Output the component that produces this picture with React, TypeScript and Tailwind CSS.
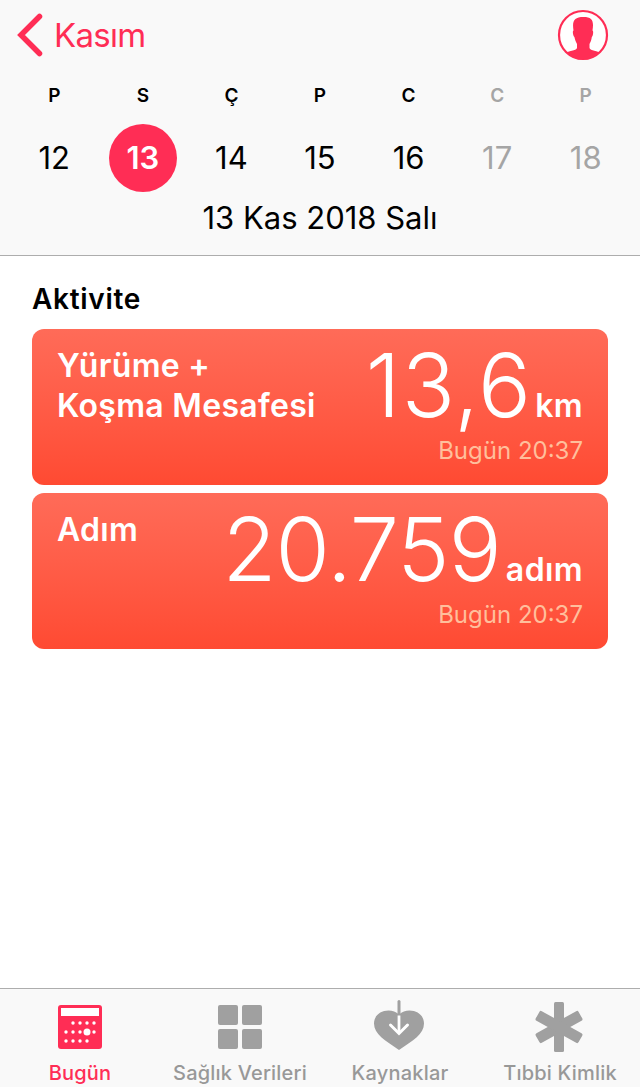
import type { ReactNode } from "react";
import clsx from "clsx";

const DAYS = [
  { letter: "P", date: 12 },
  { letter: "S", date: 13, selected: true },
  { letter: "Ç", date: 14 },
  { letter: "P", date: 15 },
  { letter: "C", date: 16 },
  { letter: "C", date: 17, future: true },
  { letter: "P", date: 18, future: true },
];

function ProfileIcon() {
  return (
    <svg width="52" height="52" viewBox="0 0 52 52" aria-hidden="true">
      <defs>
        <clipPath id="avatar">
          <circle cx="26" cy="26" r="24.5" />
        </clipPath>
      </defs>
      <circle cx="26" cy="26" r="24" fill="#fff" stroke="#ff2d55" strokeWidth="2.2" />
      <path
        clipPath="url(#avatar)"
        fill="#ff2d55"
        d="M16.500 21.500C15 12 17 8 26.500 8C35.500 8 37 12 35.500 21.500C36.800 22 36 27 34.800 28C34.500 31 33.500 33 32.500 35L32.500 39C33.500 42 40 41.500 46 45V52H6V45C12 41.500 19 42 20 39L20 35C19 33 18 31 17.400 28C16 27 15.200 22 16.500 21.500Z"
      />
    </svg>
  );
}

function CalendarIcon() {
  const dots = [
    [15, 18], [22, 18], [29, 18], [36, 18],
    [8, 27], [15, 27], [22, 27], [36, 27],
    [8, 36], [15, 36], [22, 36], [29, 36],
  ];
  return (
    <svg width="44" height="44" viewBox="0 0 44 44" aria-hidden="true">
      <rect width="44" height="44" rx="3" fill="#ff2d55" />
      <rect x="3" y="3" width="38" height="8" fill="#fff" />
      {dots.map(([x, y]) => (
        <circle key={`${x}-${y}`} cx={x} cy={y} r="1.7" fill="#fff" />
      ))}
      <circle cx="29" cy="27" r="3.5" fill="#fff" />
    </svg>
  );
}

function GridIcon() {
  return (
    <svg width="44" height="44" viewBox="0 0 44 44" fill="#a0a0a0" aria-hidden="true">
      <rect width="20" height="20" rx="2" />
      <rect x="24" width="20" height="20" rx="2" />
      <rect y="24" width="20" height="20" rx="2" />
      <rect x="24" y="24" width="20" height="20" rx="2" />
    </svg>
  );
}

function HeartIcon() {
  return (
    <svg width="52" height="54" viewBox="0 0 52 54" fill="none" aria-hidden="true">
      <path
        d="M25 14.500C22 12 18.500 10.500 14.500 10.500C6 10.500 0 16 0 23.500C0 34 11 40.500 25 50C39 40.500 50 34 50 23.500C50 16 44 10.500 35.500 10.500C31.500 10.500 28 12 25 14.500Z"
        fill="#a0a0a0"
      />
      <path d="M25 1.500V15" stroke="#a0a0a0" strokeWidth="3" strokeLinecap="round" />
      <path d="M25 15.500V33" stroke="#fff" strokeWidth="2.8" />
      <path d="M16.500 25L25 33.500L33.500 25" stroke="#fff" strokeWidth="3" strokeLinecap="round" />
    </svg>
  );
}

function AsteriskIcon() {
  return (
    <svg width="52" height="50" viewBox="0 0 52 50" fill="#a0a0a0" aria-hidden="true">
      <rect x="20" width="10" height="50" rx="1.500" />
      <rect x="19.500" y="0.500" width="11" height="49" rx="1.800" transform="rotate(61 25 25)" />
      <rect x="19.500" y="0.500" width="11" height="49" rx="1.800" transform="rotate(-61 25 25)" />
    </svg>
  );
}

type CardProps = {
  title: ReactNode;
  value: string;
  unit: string;
  time: string;
  valueClass: string;
};

function Card({ title, value, unit, time, valueClass }: CardProps) {
  return (
    <section className="flex h-[156px] justify-between rounded-xl bg-linear-to-b from-[#ff6b58] to-[#ff4a32] px-[25px] text-white">
      <h3 className="pt-[17px] text-[32px] leading-10 font-semibold tracking-[0.3px] whitespace-nowrap">{title}</h3>
      <div className="flex flex-col items-end">
        <p className="flex h-[107px] items-baseline leading-[112px] whitespace-nowrap">
          <span className={clsx("text-[88px] font-light", valueClass)}>{value}</span>
          <span className="text-[32px] font-semibold tracking-[0.4px]">{unit}</span>
        </p>
        <p className="text-2xl leading-[30px] text-[#ffbf9c]">{time}</p>
      </div>
    </section>
  );
}

const TABS = [
  { label: "Bugün", icon: <CalendarIcon />, active: true },
  { label: "Sağlık Verileri", icon: <GridIcon /> },
  { label: "Kaynaklar", icon: <HeartIcon /> },
  { label: "Tıbbi Kimlik", icon: <AsteriskIcon /> },
];

export default function App() {
  return (
    <div className="flex h-[1087px] w-[640px] flex-col overflow-hidden bg-white font-['Inter',sans-serif] text-black">
      <header className="h-64 border-b border-[#adadad] bg-[#f9f9f9]">
        <div className="flex h-[70px] items-center justify-between pr-[31px] pl-[17px]">
          <button type="button" className="flex items-center text-[33px] text-[#ff2d55]">
            <svg width="26" height="44" viewBox="0 0 26 44" fill="none" aria-hidden="true">
              <path d="M22.500 3.500L4 22L22.500 40.500" stroke="currentColor" strokeWidth="5.500" strokeLinecap="round" />
            </svg>
            <span className="ml-[11px] leading-10 tracking-[-0.7px]">Kasım</span>
          </button>
          <ProfileIcon />
        </div>

        <div className="grid grid-cols-7 px-[10px] text-center">
          {DAYS.map((day) => (
            <div key={day.date} className={clsx("flex flex-col items-center", day.future && "text-[#a5a5a5]")}>
              <span className="h-[54px] text-[19px] leading-[51px] font-semibold">{day.letter}</span>
              <span
                className={clsx(
                  "size-[68px] rounded-full text-[31px] leading-[68px]",
                  day.selected && "bg-[#ff2d55] font-semibold text-white",
                )}
              >
                {day.date}
              </span>
            </div>
          ))}
        </div>
        <p className="pt-1.5 text-center text-[31px] leading-10">13 Kas 2018 Salı</p>
      </header>

      <main className="flex-1 px-8">
        <h2 className="h-[73px] pt-[23px] text-[28px] leading-10 font-semibold tracking-[0.7px]">Aktivite</h2>
        <div className="flex flex-col gap-2">
          <Card
            title={<>Yürüme +<br />Koşma Mesafesi</>}
            value="13,6"
            unit="km"
            time="Bugün 20:37"
            valueClass="mr-[3px] tracking-[1.2px]"
          />
          <Card title="Adım" value="20.759" unit="adım" time="Bugün 20:37" valueClass="mr-[5px] tracking-[-0.8px]" />
        </div>
      </main>

      <nav className="grid h-[99px] grid-cols-4 border-t border-[#adadad] bg-[#f9f9f9]">
        {TABS.map((tab) => (
          <button
            key={tab.label}
            type="button"
            className={clsx("flex flex-col items-center", tab.active ? "text-[#ff2d55]" : "text-[#989898]")}
          >
            <span className="flex h-[74px] items-center pt-0.5">{tab.icon}</span>
            <span className="text-[20px] leading-5 font-medium tracking-[0.2px] whitespace-nowrap">{tab.label}</span>
          </button>
        ))}
      </nav>
    </div>
  );
}
